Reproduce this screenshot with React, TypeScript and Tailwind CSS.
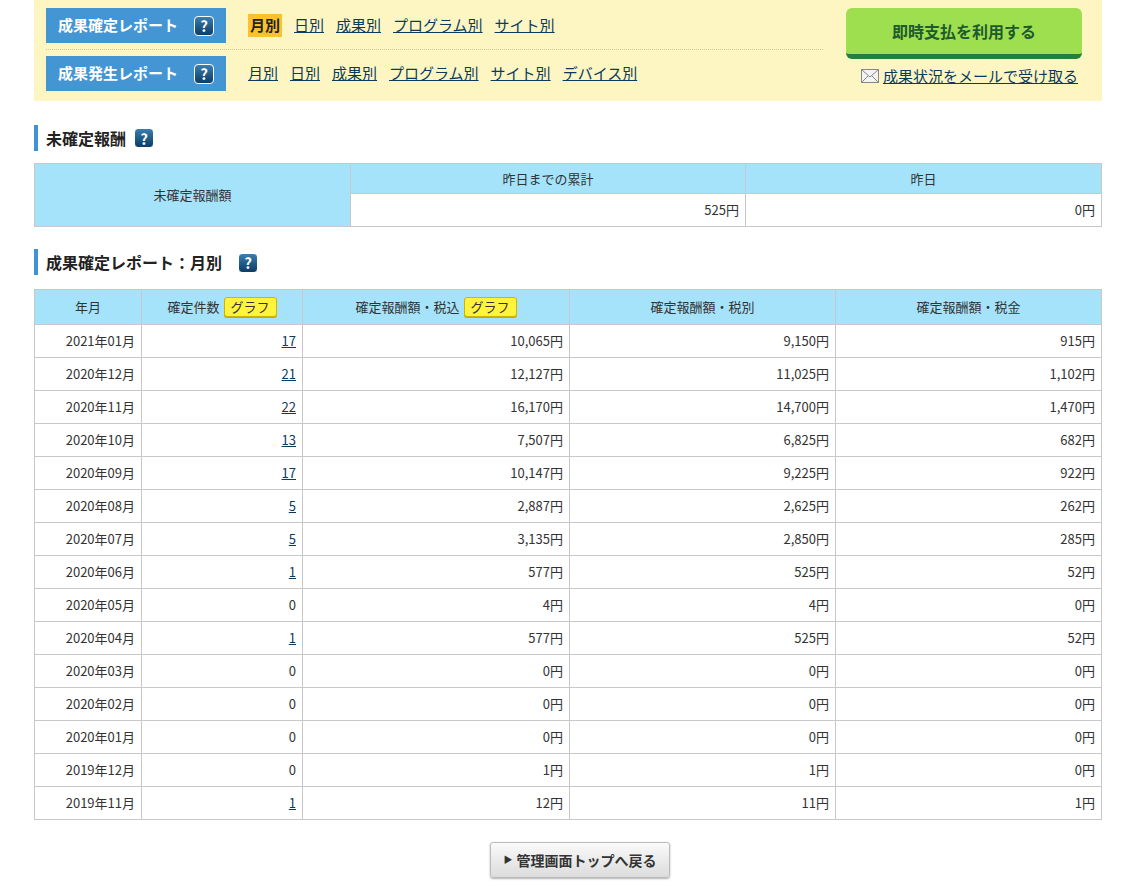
const font = { fontFamily: '"Noto Sans CJK JP", "Noto Sans", sans-serif' };

const rows: [string, string, string, string, string][] = [
  ['2021年01月', '17', '10,065円', '9,150円', '915円'],
  ['2020年12月', '21', '12,127円', '11,025円', '1,102円'],
  ['2020年11月', '22', '16,170円', '14,700円', '1,470円'],
  ['2020年10月', '13', '7,507円', '6,825円', '682円'],
  ['2020年09月', '17', '10,147円', '9,225円', '922円'],
  ['2020年08月', '5', '2,887円', '2,625円', '262円'],
  ['2020年07月', '5', '3,135円', '2,850円', '285円'],
  ['2020年06月', '1', '577円', '525円', '52円'],
  ['2020年05月', '0', '4円', '4円', '0円'],
  ['2020年04月', '1', '577円', '525円', '52円'],
  ['2020年03月', '0', '0円', '0円', '0円'],
  ['2020年02月', '0', '0円', '0円', '0円'],
  ['2020年01月', '0', '0円', '0円', '0円'],
  ['2019年12月', '0', '1円', '1円', '0円'],
  ['2019年11月', '1', '12円', '11円', '1円'],
];

function Help({ size = 20 }: { size?: number }) {
  return (
    <span
      className="inline-flex items-center justify-center rounded-[4px] bg-gradient-to-b from-[#3a7fb0] to-[#0c3d66] text-white font-bold border border-white"
      style={{ width: size, height: size, fontSize: size * 0.75, lineHeight: 1 }}
    >
      ?
    </span>
  );
}

function Graph() {
  return (
    <span className="inline-block ml-1 px-1.5 leading-[18px] bg-[#fff33b] border border-[#d4b300] rounded-[3px] text-[13px] text-[#333] shadow-[0_1px_0_#c9a800]">
      グラフ
    </span>
  );
}

function Heading({ children }: { children: React.ReactNode }) {
  return (
    <div className="flex items-center gap-2 border-l-4 border-[#3f93d4] pl-2 h-[26px] text-[16px] font-bold text-[#222]">
      {children}
    </div>
  );
}

export default function App() {
  const link = 'underline text-[#0a3a5e] hover:text-[#0077cc]';
  return (
    <div className="bg-white min-h-[893px] text-[#333] text-[13px]" style={font}>
      <div className="mx-[34px] w-[1068px]">
        {/* top panel */}
        <div className="bg-[#fdf6c3] flex h-[101px] pl-3 pr-5">
          <div className="w-[777px] pt-2">
            <div className="flex items-center h-[35px]">
              <div className="w-[180px] h-[35px] bg-[#4395d3] text-white font-bold text-[15px] flex items-center justify-between px-3">
                成果確定レポート <Help />
              </div>
              <div className="flex items-center gap-3 ml-[22px] text-[15px]">
                <span className="bg-[#fcc22d] font-bold text-[#222] px-0.5">月別</span>
                <a className={link}>日別</a>
                <a className={link}>成果別</a>
                <a className={link}>プログラム別</a>
                <a className={link}>サイト別</a>
              </div>
            </div>
            <div className="border-t border-dotted border-[#cfc79a] my-[6px]" />
            <div className="flex items-center h-[35px]">
              <div className="w-[180px] h-[35px] bg-[#4395d3] text-white font-bold text-[15px] flex items-center justify-between px-3">
                成果発生レポート <Help />
              </div>
              <div className="flex items-center gap-3 ml-[22px] text-[15px]">
                <a className={link}>月別</a>
                <a className={link}>日別</a>
                <a className={link}>成果別</a>
                <a className={link}>プログラム別</a>
                <a className={link}>サイト別</a>
                <a className={link}>デバイス別</a>
              </div>
            </div>
          </div>
          <div className="flex-1 flex flex-col items-end pt-2">
            <button className="w-[236px] h-[51px] rounded-md bg-[#9edf4f] border-b-[5px] border-[#21803e] text-[#1d5a2c] font-bold text-[16px]">
              即時支払を利用する
            </button>
            <div className="flex items-center gap-1 mt-[6px] mr-1 text-[15px]">
              <svg width="18" height="14" viewBox="0 0 18 14">
                <rect x="0.5" y="0.5" width="17" height="13" fill="#f3f3f3" stroke="#888" />
                <path d="M1 1l8 7 8-7M1 13l6-6M17 13l-6-6" fill="none" stroke="#888" />
              </svg>
              <a className={link}>成果状況をメールで受け取る</a>
            </div>
          </div>
        </div>

        {/* pending */}
        <div className="mt-[24px]">
          <Heading>
            未確定報酬 <Help />
          </Heading>
        </div>
        <table className="w-full mt-[12px] border-collapse border border-[#c8c8c8] text-[13px]">
          <tbody>
            <tr className="bg-[#a5e3fb] h-[30px]">
              <td rowSpan={2} className="w-[316px] text-center border border-[#c8c8c8]">未確定報酬額</td>
              <td className="w-[395px] text-center border border-[#c8c8c8]">昨日までの累計</td>
              <td className="text-center border border-[#c8c8c8]">昨日</td>
            </tr>
            <tr className="h-[33px]">
              <td className="text-right px-1.5 border border-[#c8c8c8] bg-white">525円</td>
              <td className="text-right px-1.5 border border-[#c8c8c8] bg-white">0円</td>
            </tr>
          </tbody>
        </table>

        {/* monthly */}
        <div className="mt-[22px]">
          <Heading>
            成果確定レポート：月別 <span className="ml-2"><Help /></span>
          </Heading>
        </div>
        <table className="w-full mt-[14px] border-collapse border border-[#c8c8c8] text-[13px]">
          <thead>
            <tr className="bg-[#a5e3fb] h-[35px]">
              <th className="w-[107px] font-normal border border-[#c8c8c8]">年月</th>
              <th className="w-[161px] font-normal border border-[#c8c8c8]">確定件数<Graph /></th>
              <th className="w-[267px] font-normal border border-[#c8c8c8]">確定報酬額・税込<Graph /></th>
              <th className="w-[266px] font-normal border border-[#c8c8c8]">確定報酬額・税別</th>
              <th className="font-normal border border-[#c8c8c8]">確定報酬額・税金</th>
            </tr>
          </thead>
          <tbody>
            {rows.map((r) => (
              <tr key={r[0]} className="h-[33px]">
                <td className="text-right px-1.5 border border-[#c8c8c8]">{r[0]}</td>
                <td className="text-right px-1.5 border border-[#c8c8c8]">
                  {r[1] === '0' ? '0' : <a className="underline text-[#0a3a5e]">{r[1]}</a>}
                </td>
                <td className="text-right px-1.5 border border-[#c8c8c8]">{r[2]}</td>
                <td className="text-right px-1.5 border border-[#c8c8c8]">{r[3]}</td>
                <td className="text-right px-1.5 border border-[#c8c8c8]">{r[4]}</td>
              </tr>
            ))}
          </tbody>
        </table>

        <div className="flex justify-center mt-[22px]">
          <button className="flex items-center gap-1 h-[36px] px-3 ml-[24px] rounded-[3px] border border-[#bbb] bg-gradient-to-b from-[#fafafa] to-[#dcdcdc] shadow-[0_1px_2px_rgba(0,0,0,0.3)] font-bold text-[14px] text-[#333]">
            <span className="text-[9px]">▶</span>管理画面トップへ戻る
          </button>
        </div>
      </div>
    </div>
  );
}
